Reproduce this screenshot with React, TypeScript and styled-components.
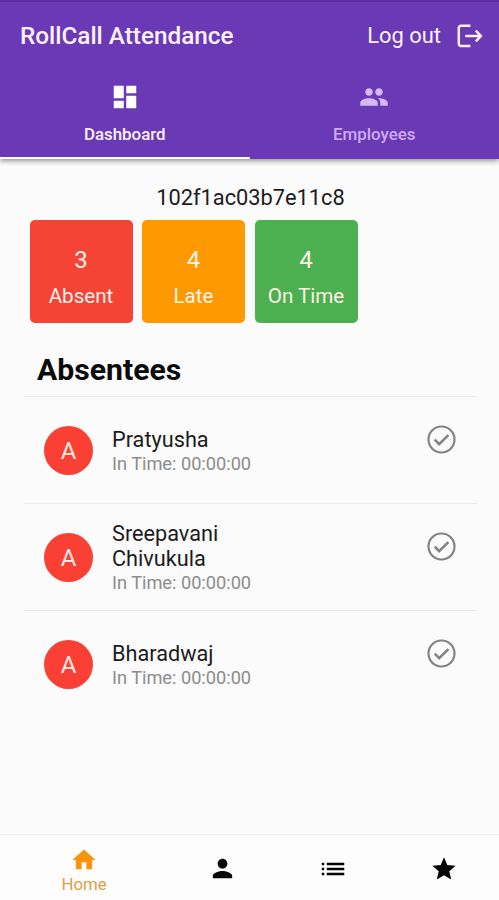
import React from "react";
import styled, { createGlobalStyle } from "styled-components";
import { MdDashboard, MdPeople, MdHome, MdPerson, MdList, MdStar } from "react-icons/md";

const GlobalStyle = createGlobalStyle`
  * { box-sizing: border-box; }
  body { margin: 0; background: #fbfbfb; font-family: Roboto, "Liberation Sans", sans-serif; }
  svg { display: block; flex-shrink: 0; }
`;

const Screen = styled.div`
  width: 499px;
  height: 900px;
  display: flex;
  flex-direction: column;
  overflow: hidden;
  background: #fbfbfb;
  color: #1c1c1c;
`;

const Header = styled.header`
  height: 159px;
  flex-shrink: 0;
  background: #6939b6;
  border-top: 2px solid #5a2ea3;
  box-shadow: 0 2px 5px rgba(0, 0, 0, 0.42);
  color: #fdf0ff;
`;

const TitleBar = styled.div`
  height: 66px;
  display: flex;
  align-items: center;
  justify-content: space-between;
  padding: 0 16px 0 20px;
`;

const Title = styled.h1`
  margin: 2px 0 0;
  font-size: 24.3px;
  line-height: 28px;
  font-weight: 500;
  white-space: nowrap;
`;

const LogoutButton = styled.button`
  display: flex;
  align-items: center;
  gap: 16px;
  margin: 0;
  padding: 2px 0 0;
  border: 0;
  background: none;
  color: inherit;
  font: 400 21.9px/28px Roboto, sans-serif;
  white-space: nowrap;
`;

const Tabs = styled.nav`
  display: grid;
  grid-template-columns: 1fr 1fr;
  height: 91px;
`;

const Tab = styled.div<{ $active?: boolean }>`
  display: flex;
  flex-direction: column;
  align-items: center;
  padding-top: 14px;
  gap: 11px;
  color: ${(p) => (p.$active ? "#fdf0ff" : "#cfabee")};
  border-bottom: ${(p) => (p.$active ? "2px solid #fdf8ff" : "0")};
  svg { color: ${(p) => (p.$active ? "#fff" : "#d6b8f2")}; }
`;

const TabLabel = styled.span`
  font-size: 16.9px;
  line-height: 22px;
  font-weight: 500;
`;

const Content = styled.main`
  flex: 1;
  padding: 25px 22px 0 24px;
`;

const DeviceId = styled.div`
  text-align: center;
  font-size: 21.8px;
  line-height: 28px;
`;

const Stats = styled.div`
  display: flex;
  gap: 9.5px;
  padding: 8px 0 0 5.5px;
`;

const StatCard = styled.div<{ $color: string }>`
  width: 103px;
  height: 103px;
  border-radius: 5px;
  background: ${(p) => p.$color};
  color: #fff2e8;
  display: flex;
  flex-direction: column;
  align-items: center;
  padding-top: 25px;
`;

const StatValue = styled.span`
  font-size: 24px;
  line-height: 30px;
`;

const StatLabel = styled.span`
  font-size: 20.6px;
  line-height: 24px;
  margin-top: 9px;
  white-space: nowrap;
`;

const SectionTitle = styled.h2`
  margin: 28px 0 7px 13px;
  font-size: 30.2px;
  line-height: 38px;
  font-weight: 700;
  color: #0b0b0b;
`;

const Row = styled.div`
  height: 107px;
  border-top: 1px solid #ebebeb;
  display: flex;
  align-items: center;
  padding: 0 21px 0 20px;
`;

const Avatar = styled.div`
  width: 49px;
  height: 49px;
  border-radius: 50%;
  background: #fa4035;
  color: #ffe9e2;
  font-size: 24px;
  line-height: 51px;
  text-align: center;
  flex-shrink: 0;
`;

const Person = styled.div`
  flex: 1;
  margin-left: 19px;
  padding-top: 2px;
`;

const Name = styled.div`
  width: 150px;
  font-size: 21.7px;
  line-height: 25px;
`;

const Time = styled.div`
  font-size: 18.2px;
  line-height: 24px;
  color: #8c8c8c;
`;

const CheckSlot = styled.div`
  align-self: flex-start;
  padding-top: 28px;
  color: #838383;
`;

const BottomNav = styled.nav`
  height: 66px;
  flex-shrink: 0;
  border-top: 1px solid #eeeeee;
  background: #fdfdfd;
  display: grid;
  grid-template-columns: 1.5fr 1fr 1fr 1fr;
  padding-left: 1px;
`;

const NavItem = styled.div<{ $active?: boolean }>`
  display: flex;
  flex-direction: column;
  align-items: center;
  justify-content: ${(p) => (p.$active ? "flex-start" : "center")};
  padding-top: ${(p) => (p.$active ? "11px" : "2px")};
  color: ${(p) => (p.$active ? "#f8940c" : "#050505")};
`;

const NavLabel = styled.span`
  font-size: 16.8px;
  line-height: 20px;
  color: #dda044;
`;

const LogoutIcon = () => (
  <svg width="26" height="24" viewBox="0 0 26 24" fill="none" stroke="currentColor" strokeWidth="2.5">
    <path d="M13.4 1.8H4A2.2 2.2 0 0 0 1.8 4v15.8A2.2 2.2 0 0 0 4 22h9.4" />
    <path d="M8.2 12h15.5M18.8 6.7l5.1 5.3-5.1 5.3" />
  </svg>
);

const CheckIcon = () => (
  <svg width="29" height="29" viewBox="0 0 29 29" fill="none" stroke="currentColor">
    <circle cx="14.5" cy="14.5" r="13" strokeWidth="2.2" />
    <path d="M7.8 14.7l4.3 4.4 9.3-9" strokeWidth="2.6" />
  </svg>
);

const stats = [
  { value: 3, label: "Absent", color: "#f54336" },
  { value: 4, label: "Late", color: "#ff9901" },
  { value: 4, label: "On Time", color: "#4db050" },
];

const absentees = ["Pratyusha", "Sreepavani Chivukula", "Bharadwaj"];

export default function App() {
  return (
    <Screen>
      <GlobalStyle />
      <Header>
        <TitleBar>
          <Title>RollCall Attendance</Title>
          <LogoutButton>
            Log out
            <LogoutIcon />
          </LogoutButton>
        </TitleBar>
        <Tabs>
          <Tab $active>
            <MdDashboard size={30} />
            <TabLabel>Dashboard</TabLabel>
          </Tab>
          <Tab>
            <MdPeople size={30} />
            <TabLabel>Employees</TabLabel>
          </Tab>
        </Tabs>
      </Header>
      <Content>
        <DeviceId>102f1ac03b7e11c8</DeviceId>
        <Stats>
          {stats.map((s) => (
            <StatCard key={s.label} $color={s.color}>
              <StatValue>{s.value}</StatValue>
              <StatLabel>{s.label}</StatLabel>
            </StatCard>
          ))}
        </Stats>
        <SectionTitle>Absentees</SectionTitle>
        {absentees.map((name) => (
          <Row key={name}>
            <Avatar>A</Avatar>
            <Person>
              <Name>{name}</Name>
              <Time>In Time: 00:00:00</Time>
            </Person>
            <CheckSlot>
              <CheckIcon />
            </CheckSlot>
          </Row>
        ))}
      </Content>
      <BottomNav>
        <NavItem $active>
          <MdHome size={28} />
          <NavLabel>Home</NavLabel>
        </NavItem>
        <NavItem>
          <MdPerson size={29} />
        </NavItem>
        <NavItem>
          <MdList size={30} />
        </NavItem>
        <NavItem>
          <MdStar size={28} />
        </NavItem>
      </BottomNav>
    </Screen>
  );
}
